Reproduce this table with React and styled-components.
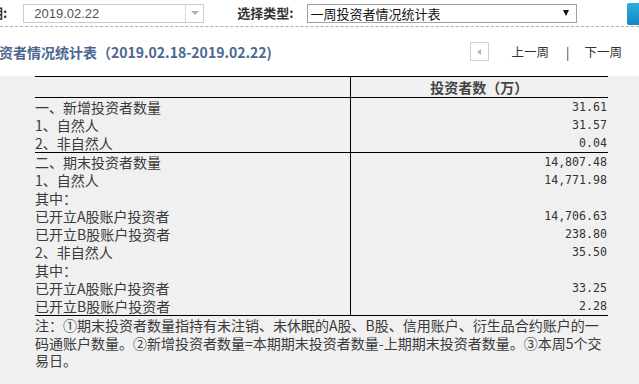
import React from "react";
import styled, { createGlobalStyle } from "styled-components";

const GlobalStyle = createGlobalStyle`
  html, body {
    margin: 0;
    padding: 0;
    background: #ffffff;
    overflow: hidden;
  }
  body {
    font-family: "Noto Sans CJK SC", "Liberation Sans", sans-serif;
    color: #333;
  }
`;

const Page = styled.div`
  width: 639px;
  height: 384px;
  overflow: hidden;
  display: flex;
  flex-direction: column;
`;

const FilterBar = styled.div`
  height: 27px;
  display: flex;
  align-items: center;
  border-bottom: 1px dashed #98b4ca;
  box-sizing: border-box;
  white-space: nowrap;
  & > * {
    flex-shrink: 0;
  }
`;

const FilterLabel = styled.span`
  font-size: 13px;
  font-weight: bold;
  color: #333;
  line-height: 18px;
  margin-left: ${(p) => p.$offset || 0}px;
`;

const DateBox = styled.div`
  width: 181px;
  height: 19px;
  margin-left: ${(p) => p.$gap}px;
  border: 1px solid #cccccc;
  box-sizing: border-box;
  display: flex;
  align-items: center;
  background: #fff;
`;

const DateText = styled.span`
  flex: 1;
  padding-left: 10px;
  font-family: "Liberation Sans", Arial, sans-serif;
  font-size: 13px;
  color: #555;
`;

const DateArrow = styled.span`
  width: 17px;
  height: 100%;
  border-left: 1px solid #d6d6d6;
  display: flex;
  align-items: center;
  justify-content: center;
  &::after {
    content: "";
    border-left: 4px solid transparent;
    border-right: 4px solid transparent;
    border-top: 4px solid #b0b0b0;
  }
`;

const SelectBox = styled.div`
  width: 270px;
  height: 19px;
  margin-left: 14px;
  border: 1px solid #a0a0a0;
  box-sizing: border-box;
  display: flex;
  align-items: center;
  justify-content: space-between;
  padding: 0 7px 0 2px;
  font-size: 13px;
  color: #111;
  background: #fff;
  &::after {
    content: "";
    border-left: 3.5px solid transparent;
    border-right: 3.5px solid transparent;
    border-top: 6px solid #111;
  }
`;

const BlueButton = styled.div`
  width: 40px;
  height: 22px;
  margin-left: 50px;
  margin-top: 1px;
  border-radius: 2px;
  background: linear-gradient(#2aaedf, #1588c2);
`;

const TitleRow = styled.div`
  height: 49px;
  display: flex;
  align-items: center;
  padding-right: 17px;
  white-space: nowrap;
`;

const Title = styled.h2`
  margin: 0 0 0 -43px;
  font-size: 14px;
  font-weight: bold;
  color: #4a688e;
  flex: 1;
  line-height: 20px;
`;

const PrevBox = styled.span`
  width: 19px;
  height: 19px;
  border: 1px solid #cfcfcf;
  box-sizing: border-box;
  display: flex;
  align-items: center;
  justify-content: center;
  &::after {
    content: "";
    border-top: 3.5px solid transparent;
    border-bottom: 3.5px solid transparent;
    border-right: 4px solid #b5b5b5;
  }
`;

const PageLink = styled.span`
  font-size: 12.5px;
  color: #333;
  margin-left: ${(p) => p.$gap}px;
  line-height: 18px;
`;

const GrayArea = styled.div`
  flex: 1;
  background: #f0f0f0;
  padding-left: 35px;
`;

const Table = styled.table`
  width: 573px;
  border-collapse: collapse;
  table-layout: fixed;
  font-size: 14px;
  color: #3a3a3a;
`;

const HeadCell = styled.th`
  height: 20px;
  padding: 0;
  border-top: 1px solid #000;
  border-bottom: 1px solid #000;
  border-right: ${(p) => (p.$divider ? "1px solid #000" : "none")};
  font-weight: bold;
  color: #444;
  line-height: 20px;
  text-align: center;
`;

const Row = styled.tr`
  border-top: ${(p) => (p.$group ? "1px solid #000" : "none")};
  border-bottom: ${(p) => (p.$last ? "1px solid #000" : "none")};
`;

const LabelCell = styled.td`
  height: 18px;
  padding: 0;
  line-height: 18px;
  border-right: 1px solid #000;
  white-space: nowrap;
`;

const NumCell = styled.td`
  height: 18px;
  padding: 0 1px 0 0;
  text-align: right;
  font-family: "DejaVu Sans Mono", "Liberation Mono", monospace;
  font-size: 11.6px;
  line-height: 18px;
  color: #333;
`;

const Note = styled.div`
  width: 573px;
  font-size: 14px;
  line-height: 17.5px;
  color: #3a3a3a;
  margin-top: 1px;
`;

const NoteLine = styled.div`
  white-space: nowrap;
`;

const rows = [
  { label: "一、新增投资者数量", value: "31.61" },
  { label: "1、自然人", value: "31.57" },
  { label: "2、非自然人", value: "0.04" },
  { label: "二、期末投资者数量", value: "14,807.48", group: true },
  { label: "1、自然人", value: "14,771.98" },
  { label: "其中：", value: "" },
  { label: "已开立A股账户投资者", value: "14,706.63" },
  { label: "已开立B股账户投资者", value: "238.80" },
  { label: "2、非自然人", value: "35.50" },
  { label: "其中：", value: "" },
  { label: "已开立A股账户投资者", value: "33.25" },
  { label: "已开立B股账户投资者", value: "2.28" },
];

export default function App() {
  return (
    <>
      <GlobalStyle />
      <Page>
        <FilterBar>
          <FilterLabel $offset={-23}>日期:</FilterLabel>
          <DateBox $gap={16}>
            <DateText>2019.02.22</DateText>
            <DateArrow />
          </DateBox>
          <FilterLabel $offset={33}>选择类型:</FilterLabel>
          <SelectBox>一周投资者情况统计表</SelectBox>
          <BlueButton />
        </FilterBar>

        <TitleRow>
          <Title>一周投资者情况统计表（2019.02.18-2019.02.22)</Title>
          <PrevBox />
          <PageLink $gap={23}>上一周</PageLink>
          <PageLink $gap={17}>|</PageLink>
          <PageLink $gap={15}>下一周</PageLink>
        </TitleRow>

        <GrayArea>
          <Table>
            <colgroup>
              <col style={{ width: 315 }} />
              <col />
            </colgroup>
            <thead>
              <tr>
                <HeadCell $divider></HeadCell>
                <HeadCell>投资者数（万）</HeadCell>
              </tr>
            </thead>
            <tbody>
              {rows.map((r, i) => (
                <Row key={i} $group={r.group} $last={i === rows.length - 1}>
                  <LabelCell>{r.label}</LabelCell>
                  <NumCell>{r.value}</NumCell>
                </Row>
              ))}
            </tbody>
          </Table>
          <Note>
            <NoteLine>注：①期末投资者数量指持有未注销、未休眠的A股、B股、信用账户、衍生品合约账户的一</NoteLine>
            <NoteLine>码通账户数量。②新增投资者数量=本期期末投资者数量-上期期末投资者数量。③本周5个交</NoteLine>
            <NoteLine>易日。</NoteLine>
          </Note>
        </GrayArea>
      </Page>
    </>
  );
}
